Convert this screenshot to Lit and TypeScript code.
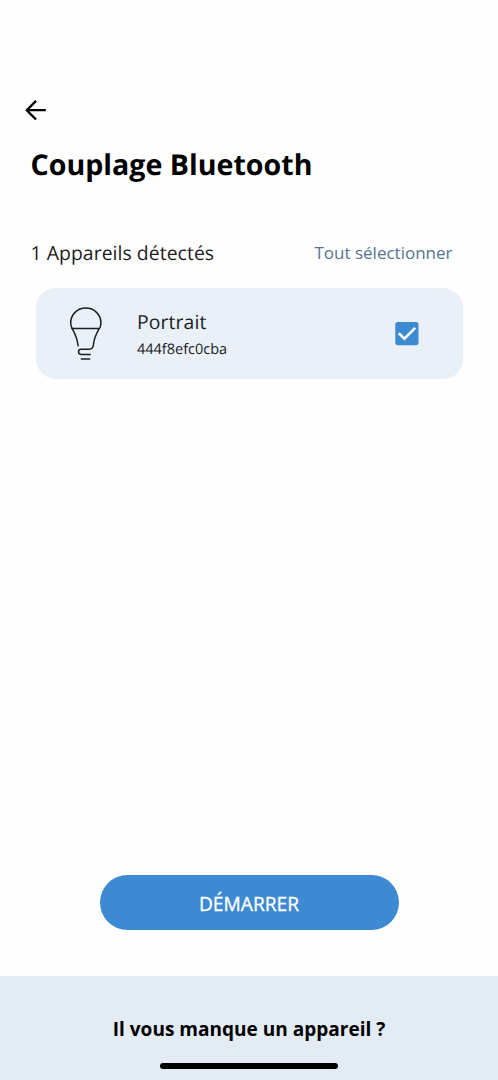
import { LitElement, html, svg, css } from "lit";
import { customElement, state } from "lit/decorators.js";

@customElement("app-root")
export class AppRoot extends LitElement {
  static styles = css`
    :host {
      display: flex;
      flex-direction: column;
      box-sizing: border-box;
      width: 498px;
      height: 1080px;
      overflow: hidden;
      background: #fefefe;
      color: #000;
      font-family: "Open Sans", "Noto Sans", sans-serif;
      text-rendering: geometricPrecision;
    }
    button {
      font: inherit;
      color: inherit;
      border: 0;
      padding: 0;
      background: none;
      cursor: pointer;
      white-space: nowrap;
    }
    svg { display: block; }
    .back { margin: 96px 0 0 22px; width: 28px; height: 28px; }
    h1 {
      margin: 21px 0 0 30.5px;
      font-size: 28.6px;
      line-height: 40px;
      font-weight: 700;
      white-space: nowrap;
    }
    .row {
      display: flex;
      justify-content: space-between;
      align-items: center;
      margin: 52px 45.5px 0 30.5px;
      height: 30px;
    }
    .count { font-size: 19.4px; letter-spacing: 0.05px; color: #1c1c1e; }
    .all { padding-top: 1px; font-size: 17px; color: #57738f; }
    .card {
      display: flex;
      align-items: center;
      box-sizing: border-box;
      margin: 21px 35.5px 0 35.5px;
      height: 91px;
      padding: 0 44px 0 31.5px;
      border-radius: 20px;
      background: #e9f0f8;
      color: #1a1d24;
    }
    .info { flex: 1; margin-left: 32px; padding-top: 4px; }
    .name { font-size: 19.4px; line-height: 28px; letter-spacing: 0.1px; }
    .mac { font-size: 14.5px; line-height: 26px; padding-top: 1px; }
    .start {
      margin: auto auto 46px;
      flex: none;
      width: 299px;
      height: 55px;
      padding-top: 1px;
      border-radius: 28px;
      background: #3e8ad2;
      color: #fff;
      font-size: 19.2px;
      -webkit-text-stroke: 0.3px #fff;
    }
    footer {
      flex: none;
      display: flex;
      flex-direction: column;
      align-items: center;
      box-sizing: border-box;
      height: 104px;
      padding-top: 39px;
      background: #e3ebf5;
    }
    .missing { font-size: 19.05px; line-height: 28px; font-weight: 700; }
    .home { width: 178px; height: 6px; margin-top: 20px; border-radius: 3px; background: #000; }
  `;

  @state() private checked = true;

  private toggle = () => { this.checked = !this.checked; };

  render() {
    return html`
      <button class="back" aria-label="Retour">
        <svg width="28" height="28" viewBox="0 0 28 28" fill="none" stroke="#000" stroke-width="2.3">
          <path d="M23.8 14.2H5M14 4.9L4.8 14.2L14 23.5" />
        </svg>
      </button>
      <h1>Couplage Bluetooth</h1>
      <div class="row">
        <span class="count">1 Appareils détectés</span>
        <button class="all" @click=${() => { this.checked = true; }}>Tout sélectionner</button>
      </div>
      <div class="card">
        <svg width="38" height="56" viewBox="0 0 38 56" fill="none" stroke="#1a1d24" stroke-width="1.5" stroke-linecap="round" stroke-linejoin="round">
          <path d="M5.2 22.6C4.1 20.6 3.7 18.8 3.7 16.8C3.7 8.6 10.4 2.1 18.8 2.1S33.9 8.6 33.9 16.8C33.9 18.5 33.7 19.8 33.1 21.4" />
          <path d="M5.2 22.6H32.2" />
          <path d="M5.2 22.6C9.4 30 10.4 33 11.1 39.8" />
          <path d="M32.2 22.6C28.2 29.3 27 33.3 26.5 38.3C26.2 41.8 25.2 43.3 22.3 43.3H14C10.7 43.3 10.7 48.4 14 48.4H23.2" />
          <path d="M14.4 53H22.6" />
        </svg>
        <div class="info">
          <div class="name">Portrait</div>
          <div class="mac">444f8efc0cba</div>
        </div>
        <button role="checkbox" aria-checked=${this.checked} @click=${this.toggle}>
          <svg width="24" height="24" viewBox="0 0 24 24" fill="none">
            <rect x="0.3" y="0" width="23.2" height="23.2" rx="2.6" fill="#3e8ad2" />
            ${this.checked
              ? svg`<path d="M3.8 11.3L9.4 16.7L20.2 5.9" stroke="#fff" stroke-width="2.6" />`
              : null}
          </svg>
        </button>
      </div>
      <button class="start">DÉMARRER</button>
      <footer>
        <button class="missing">Il vous manque un appareil ?</button>
        <div class="home"></div>
      </footer>
    `;
  }
}
